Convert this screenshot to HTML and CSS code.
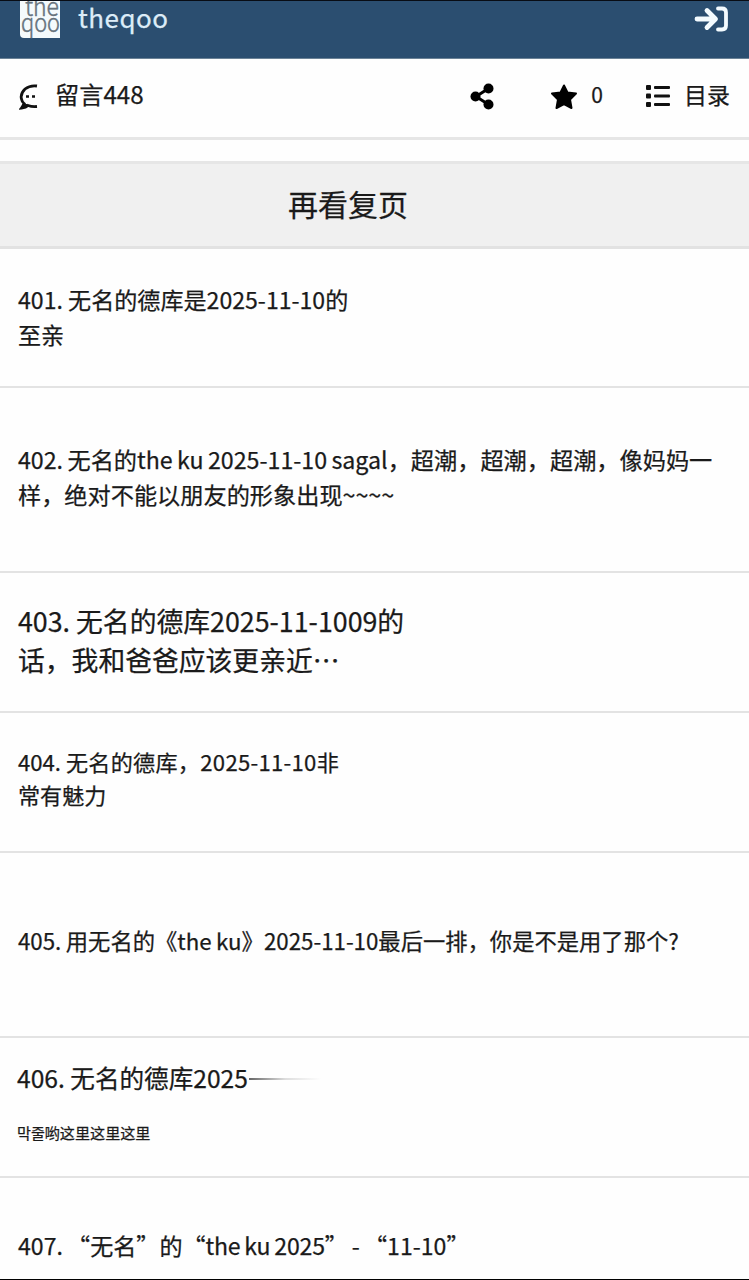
FILE: index.html
```
<!DOCTYPE html>
<html lang="zh-CN">

<head>
  <meta charset="UTF-8">
  <meta name="viewport" content="width=device-width, initial-scale=1.0">
  <title>theqoo</title>

  <link rel="stylesheet" href="styles.css">
</head>

<body>
  <div class="page">
    <header class="top">
      <svg class="logo" width="41" height="38" viewBox="0 0 41 38">
        <path d="M0 0H40V37H4Q0 37 0 33Z" fill="#f4fafc"/>
        <text x="5" y="15" textLength="34" lengthAdjust="spacingAndGlyphs">the</text>
        <text x="1" y="31" textLength="39" lengthAdjust="spacingAndGlyphs">qoo</text>
      </svg>
      <span class="name">theqoo</span>
      <svg class="login" width="36" height="26" viewBox="0 0 36 26" fill="none" stroke="#f4fbff" stroke-width="4.8" stroke-linecap="round" stroke-linejoin="round">
        <path d="M3 13H21M13 4.500L21.500 13L13 21.500"/>
        <path d="M24 2.500H28Q32 2.500 32 6.500V19.500Q32 23.500 28 23.500H24" stroke-width="3.800"/>
      </svg>
    </header>

    <div class="bar">
      <svg class="comment" width="20" height="26" viewBox="0 0 20 26" fill="none" stroke="#111" stroke-width="2.8">
        <path d="M18 2Q11 1 6 5Q1 10 2.500 15Q3 18 5 19.500Q4 22 2.500 24Q7 23.500 9 21.500Q13 23 18 22.500"/>
        <path d="M7 12.500H10M13 12.500H16" stroke-width="2.600"/>
        <path d="M2 24.500L5 19L9 21.500Z" fill="#111" stroke-width="1"/>
      </svg>
      <span class="count">留言448</span>
      <svg class="share" width="25" height="27" viewBox="0 0 25 27" fill="#000">
        <path d="M18.500 5.500L6 13.500L18.500 21.500" fill="none" stroke="#000" stroke-width="3"/>
        <circle cx="18.500" cy="5.500" r="5"/>
        <circle cx="5.500" cy="13.500" r="5"/>
        <circle cx="18.500" cy="21.500" r="5"/>
      </svg>
      <svg class="star" width="28" height="27" viewBox="0 0 28 27">
        <path d="M14 2.500L17.500 9.500L26 10.500L20 16.500L21.500 25L14 21L6.500 25L8 16.500L2 10.500L10.500 9.500Z" fill="#000" stroke="#000" stroke-width="2" stroke-linejoin="round"/>
      </svg>
      <span class="num">0</span>
      <svg class="list" width="25" height="22" viewBox="0 0 25 22" fill="#111">
        <rect x="0" y="0" width="5" height="5" rx="1"/>
        <rect x="0" y="8.500" width="5" height="5" rx="1"/>
        <rect x="0" y="17" width="5" height="5" rx="1"/>
        <rect x="8" y="1" width="16" height="3" rx="1"/>
        <rect x="8" y="9.500" width="16" height="3" rx="1"/>
        <rect x="8" y="18" width="16" height="3" rx="1"/>
      </svg>
      <span class="menu">目录</span>
    </div>

    <div class="more">再看复页</div>

    <ul class="comments">
      <li class="c401">401. 无名的德库是2025-11-10的<br>至亲</li>
      <li class="c402">402. 无名的the ku 2025-11-10 sagal，超潮，超潮，超潮，像妈妈一<br>样，绝对不能以朋友的形象出现~~~~</li>
      <li class="c403">403. 无名的德库2025-11-1009的<br>话，我和爸爸应该更亲近…</li>
      <li class="c404">404. <span class="wide">无名的德库，2025-11-10非</span><br>常有魅力</li>
      <li class="c405">405. 用无名的《the ku》2025-11-10最后一排，你是不是用了那个?</li>
      <li class="c406">
        <p class="head">406. 无名的德库2025<i class="fade"></i></p>
        <p class="reply">막줄哟这里这里这里</p>
      </li>
      <li class="c407">407. “无名”的<span class="tight">“the ku 2025”</span> - “11-10”</li>
    </ul>
  </div>
</body>

</html>
```
FILE: styles.css
```
* {
  margin: 0;
  padding: 0;
  box-sizing: border-box;
}

ul {
  list-style: none;
}

svg {
  display: block;
  flex: none;
}

body {
  background-color: #fefefe;
  color: #1a1a1a;
  font-family: "Noto Sans CJK SC", sans-serif;
  -webkit-text-stroke: 0.25px;
}

.page {
  width: 749px;
  height: 1280px;
  overflow: hidden;
  border-top: 1px solid #080c14;
  border-bottom: 1px solid #000;
}

.top {
  display: flex;
  align-items: flex-start;
  height: 58px;
  padding: 0 18px 0 20px;
  background-color: #2b4e70;
  border-bottom: 1px solid #6b8296;
}

.logo text {
  font-family: "Noto Sans CJK SC", sans-serif;
  font-size: 26px;
  font-weight: 300;
  fill: #66737d;
  stroke: #66737d;
  stroke-width: 0.5px;
}

.name {
  margin-left: 17px;
  font-size: 26px;
  line-height: 31px;
  letter-spacing: 0.5px;
  color: #dcecf8;
}

.login {
  margin: 5px 1px 0 auto;
}

.bar {
  display: flex;
  align-items: center;
  height: 81px;
  padding: 0 19px 4px;
  border-bottom: 3px solid #e6e6e6;
  white-space: nowrap;
}

.bar span {
  margin-top: -5px;
}

.comment {
  margin-top: 2px;
}

.count {
  width: 417px;
  padding-left: 16px;
  font-size: 24.2px;
}

.share {
  margin-left: 16px;
}

.star {
  margin-left: 55px;
}

.num {
  width: 41px;
  margin-left: 13px;
  font-size: 21px;
}

.list {
  margin-left: 14px;
}

.menu {
  margin-left: 13px;
  font-size: 23px;
}

.more {
  height: 88px;
  margin-top: 21px;
  padding-left: 288px;
  background-color: #f0f0f0;
  border-top: 3px solid #e6e6e6;
  border-bottom: 3px solid #e2e2e2;
  font-size: 30px;
  line-height: 79px;
}

.comments li {
  padding-left: 18px;
  border-bottom: 2px solid #e3e3e3;
  white-space: nowrap;
}

.comments .c401 {
  height: 139px;
  padding-top: 33px;
  font-size: 23.1px;
  line-height: 34.5px;
}

.comments .c402 {
  height: 185px;
  padding-top: 54px;
  font-size: 23.2px;
  line-height: 34.5px;
  word-spacing: -0.8px;
}

.comments .c403 {
  height: 140px;
  padding-top: 28px;
  font-size: 26.8px;
  line-height: 39px;
}

.comments .c404 {
  height: 140px;
  padding-top: 32px;
  font-size: 22.1px;
  line-height: 33px;
}

.wide {
  letter-spacing: 0.3px;
}

.comments .c405 {
  height: 185px;
  padding-top: 71px;
  font-size: 22.3px;
  line-height: 33px;
  word-spacing: -0.5px;
}

.comments .c406 {
  height: 140px;
  padding-top: 21px;
  padding-left: 17px;
}

.head {
  display: flex;
  align-items: center;
  font-size: 24.6px;
  line-height: 36px;
}

.fade {
  width: 72px;
  height: 2px;
  margin: 4px 0 0 1px;
  background: linear-gradient(to right, #666, #ddd 50%, #fefefe);
}

.reply {
  margin-top: 26px;
  font-size: 15.1px;
  line-height: 22px;
}

.comments .c407 {
  padding-top: 50px;
  border-bottom: none;
  font-size: 23.1px;
  line-height: 35px;
  word-spacing: -1px;
}

.tight {
  letter-spacing: -0.2px;
}
```
